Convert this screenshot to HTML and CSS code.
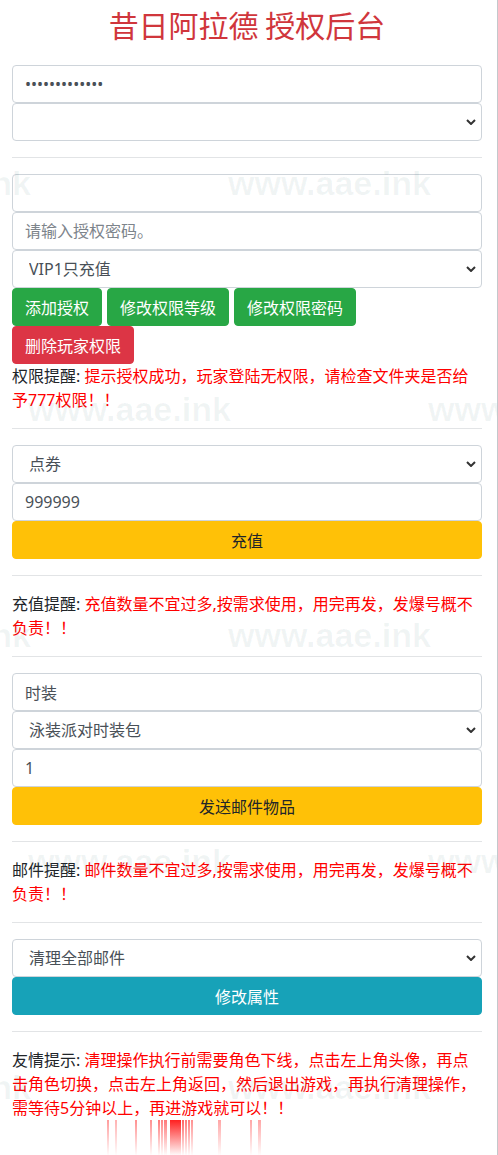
FILE: index.html
```html
<!DOCTYPE html>
<html lang="zh-CN">
<head>
<meta charset="utf-8">
<title>昔日阿拉德 授权后台</title>
<link rel="stylesheet" href="styles.css">
</head>
<body>
<div class="page">
  <h1 class="title">昔日阿拉德 授权后台</h1>

  <input class="field" type="password" value="1234567890123">
  <div class="select-wrap">
    <select class="field select"><option></option></select>
    <svg class="chev" viewBox="0 0 10 6" width="10" height="6"><path d="M1 1 L5 5 L9 1" fill="none" stroke="#333" stroke-width="2"/></svg>
  </div>

  <hr class="rule">

  <input class="field" type="text" value="">
  <input class="field" type="text" placeholder="请输入授权密码。">
  <div class="select-wrap">
    <select class="field select"><option>VIP1只充值</option></select>
    <svg class="chev" viewBox="0 0 10 6" width="10" height="6"><path d="M1 1 L5 5 L9 1" fill="none" stroke="#333" stroke-width="2"/></svg>
  </div>
  <div class="btn-row">
    <button class="btn btn-green">添加授权</button>
    <button class="btn btn-green">修改权限等级</button>
    <button class="btn btn-green">修改权限密码</button>
  </div>
  <div class="btn-row">
    <button class="btn btn-red">删除玩家权限</button>
  </div>
  <p class="note">权限提醒: <span class="warn">提示授权成功，玩家登陆无权限，请检查文件夹是否给予777权限！！</span></p>

  <hr class="rule">

  <div class="select-wrap">
    <select class="field select"><option>点券</option></select>
    <svg class="chev" viewBox="0 0 10 6" width="10" height="6"><path d="M1 1 L5 5 L9 1" fill="none" stroke="#333" stroke-width="2"/></svg>
  </div>
  <input class="field" type="text" value="999999">
  <button class="btn btn-block btn-yellow">充值</button>

  <hr class="rule">
  <p class="note">充值提醒: <span class="warn">充值数量不宜过多,按需求使用，用完再发，发爆号概不负责！！</span></p>
  <hr class="rule">

  <input class="field" type="text" value="时装">
  <div class="select-wrap">
    <select class="field select"><option>泳装派对时装包</option></select>
    <svg class="chev" viewBox="0 0 10 6" width="10" height="6"><path d="M1 1 L5 5 L9 1" fill="none" stroke="#333" stroke-width="2"/></svg>
  </div>
  <input class="field" type="text" value="1">
  <button class="btn btn-block btn-yellow">发送邮件物品</button>

  <hr class="rule">
  <p class="note">邮件提醒: <span class="warn">邮件数量不宜过多,按需求使用，用完再发，发爆号概不负责！！</span></p>
  <hr class="rule">

  <div class="select-wrap">
    <select class="field select"><option>清理全部邮件</option></select>
    <svg class="chev" viewBox="0 0 10 6" width="10" height="6"><path d="M1 1 L5 5 L9 1" fill="none" stroke="#333" stroke-width="2"/></svg>
  </div>
  <button class="btn btn-block btn-teal">修改属性</button>

  <hr class="rule">
  <p class="note">友情提示: <span class="warn">清理操作执行前需要角色下线，点击左上角头像，再点击角色切换，点击左上角返回，然后退出游戏，再执行清理操作，需等待5分钟以上，再进游戏就可以！！</span></p>

  <svg class="bars" width="160" height="36" viewBox="0 0 160 36">
    <defs>
      <linearGradient id="fade" x1="0" y1="0" x2="0" y2="1">
        <stop offset="0" stop-color="#ff2020" stop-opacity="1"/>
        <stop offset="1" stop-color="#ff2020" stop-opacity="0"/>
      </linearGradient>
    </defs>
    <g fill="url(#fade)">
      <rect x="2" y="0" width="2" height="36" opacity="0.45"/>
      <rect x="10" y="0" width="2" height="36" opacity="0.35"/>
      <rect x="30" y="0" width="2" height="36" opacity="0.5"/>
      <rect x="45" y="0" width="2" height="36" opacity="0.5"/>
      <rect x="53" y="0" width="2" height="36" opacity="0.6"/>
      <rect x="56" y="0" width="2" height="36" opacity="0.55"/>
      <rect x="59" y="0" width="3" height="36" opacity="0.6"/>
      <rect x="65" y="0" width="11" height="36" opacity="1"/>
      <rect x="77" y="0" width="2" height="36" opacity="0.7"/>
      <rect x="80" y="0" width="2" height="36" opacity="0.6"/>
      <rect x="83" y="0" width="2" height="36" opacity="0.6"/>
      <rect x="86" y="0" width="2" height="36" opacity="0.5"/>
      <rect x="113" y="0" width="3" height="36" opacity="0.4"/>
      <rect x="145" y="0" width="2" height="36" opacity="0.4"/>
      <rect x="153" y="0" width="3" height="36" opacity="0.4"/>
    </g>
  </svg>

  <div class="watermarks" aria-hidden="true">
    <span class="wm" style="left:228px;top:166px">www.aae.ink</span>
    <span class="wm" style="left:-172px;top:166px">www.aae.ink</span>
    <span class="wm" style="left:28px;top:392px">www.aae.ink</span>
    <span class="wm" style="left:428px;top:392px">www.aae.ink</span>
    <span class="wm" style="left:228px;top:618px">www.aae.ink</span>
    <span class="wm" style="left:-172px;top:618px">www.aae.ink</span>
    <span class="wm" style="left:28px;top:844px">www.aae.ink</span>
    <span class="wm" style="left:428px;top:844px">www.aae.ink</span>
    <span class="wm" style="left:228px;top:1070px">www.aae.ink</span>
    <span class="wm" style="left:-172px;top:1070px">www.aae.ink</span>
  </div>
</div>
</body>
</html>
```

FILE: styles.css
```css
* {
  box-sizing: border-box;
}

html, body {
  margin: 0;
  padding: 0;
  background: #fff;
}

body {
  font-family: "Noto Sans", "Noto Sans CJK SC", sans-serif;
  font-size: 16px;
  line-height: 24px;
  color: #212529;
}

.page {
  position: relative;
  overflow: hidden;
  min-height: 1155px;
  padding: 0 15px 0 12px;
  border-right: 1px solid #c4c8cc;
}

.title {
  margin: 6px 0 23px;
  font-size: 30px;
  line-height: 36px;
  font-weight: 400;
  text-align: center;
  color: #d0363c;
  font-family: "Noto Sans CJK SC", sans-serif;
}

.field {
  display: block;
  width: 100%;
  height: 38px;
  margin: 0;
  padding: 6px 12px;
  font-family: "Noto Sans", "Noto Sans CJK SC", sans-serif;
  font-size: 16px;
  line-height: 24px;
  color: #495057;
  background: #fff;
  border: 1px solid #ced4da;
  border-radius: 4px;
  outline: none;
}

.field::placeholder {
  color: #7d848b;
}

.select-wrap {
  position: relative;
}

.select {
  -webkit-appearance: none;
  appearance: none;
  padding-left: 16px;
  padding-right: 28px;
}

.chev {
  position: absolute;
  right: 6px;
  top: 16px;
  pointer-events: none;
}

.btn-row {
  display: flex;
  gap: 5px;
}

.btn {
  display: inline-block;
  height: 38px;
  padding: 6px 12px;
  font-family: "Noto Sans CJK SC", sans-serif;
  font-size: 16px;
  line-height: 24px;
  border: 1px solid transparent;
  border-radius: 4px;
  color: #fff;
  text-align: center;
  cursor: pointer;
}

.btn-block {
  display: block;
  width: 100%;
}

.btn-green {
  background: #28a745;
  border-color: #28a745;
}

.btn-red {
  background: #dc3545;
  border-color: #dc3545;
}

.btn-yellow {
  background: #ffc107;
  border-color: #ffc107;
  color: #212529;
}

.btn-teal {
  background: #17a2b8;
  border-color: #17a2b8;
}

.rule {
  margin: 16px 0;
  height: 0;
  border: 0;
  border-top: 1px solid #e2e4e6;
}

.note {
  margin: 0;
  font-size: 16px;
  line-height: 24px;
  color: #212529;
}

.warn {
  color: #ff0000;
}

.bars {
  display: block;
  margin-left: 93px;
}

.watermarks {
  position: absolute;
  inset: 0;
  pointer-events: none;
}

.wm {
  position: absolute;
  font-family: "Liberation Sans", sans-serif;
  font-weight: 700;
  font-size: 34px;
  line-height: 34px;
  white-space: nowrap;
  color: rgba(20, 80, 80, 0.06);
}
```
